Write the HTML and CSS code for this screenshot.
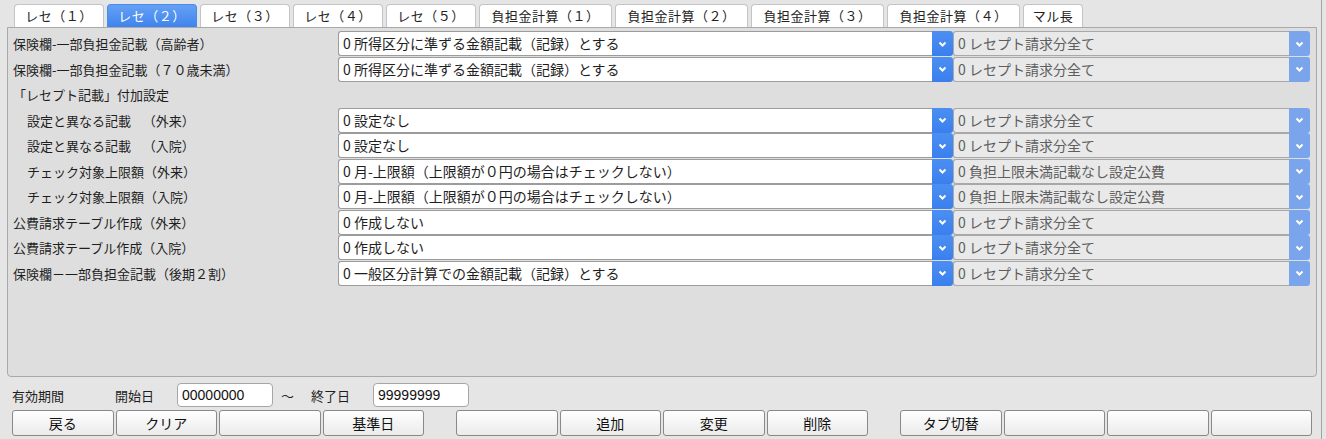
FILE: index.html
```html
<!DOCTYPE html>
<html lang="ja">
    <head>
        <meta charset="UTF-8" />
        <title>レセプト設定</title>
        <link rel="stylesheet" href="styles.css">
    </head>
    <body>
        <div class="screen">
            <!-- タブ -->
            <div class="tabs">
                <div class="tab">レセ（１）</div>
                <div class="tab active">レセ（２）</div>
                <div class="tab">レセ（３）</div>
                <div class="tab">レセ（４）</div>
                <div class="tab">レセ（５）</div>
                <div class="tab wide">負担金計算（１）</div>
                <div class="tab wide">負担金計算（２）</div>
                <div class="tab wide">負担金計算（３）</div>
                <div class="tab wide">負担金計算（４）</div>
                <div class="tab short">マル長</div>
            </div>

            <div class="panel">
                <div class="form-row">
                    <div class="label">保険欄-一部負担金記載（高齢者）</div>
                    <div class="combo"><span class="combo-text">0 所得区分に準ずる金額記載（記録）とする</span><span class="combo-btn"><svg width="9" height="6" viewBox="0 0 9 6"><polyline points="1.5,1.5 4.5,4.5 7.5,1.5" /></svg></span></div>
                    <div class="combo disabled"><span class="combo-text">0 レセプト請求分全て</span><span class="combo-btn"><svg width="9" height="6" viewBox="0 0 9 6"><polyline points="1.5,1.5 4.5,4.5 7.5,1.5" /></svg></span></div>
                </div>
                <div class="form-row">
                    <div class="label">保険欄-一部負担金記載（７０歳未満）</div>
                    <div class="combo"><span class="combo-text">0 所得区分に準ずる金額記載（記録）とする</span><span class="combo-btn"><svg width="9" height="6" viewBox="0 0 9 6"><polyline points="1.5,1.5 4.5,4.5 7.5,1.5" /></svg></span></div>
                    <div class="combo disabled"><span class="combo-text">0 レセプト請求分全て</span><span class="combo-btn"><svg width="9" height="6" viewBox="0 0 9 6"><polyline points="1.5,1.5 4.5,4.5 7.5,1.5" /></svg></span></div>
                </div>
                <div class="form-row">
                    <div class="label">「レセプト記載」付加設定</div>
                </div>
                <div class="form-row">
                    <div class="label indent">設定と異なる記載&nbsp;&nbsp;&nbsp;&nbsp;（外来）</div>
                    <div class="combo"><span class="combo-text">0 設定なし</span><span class="combo-btn"><svg width="9" height="6" viewBox="0 0 9 6"><polyline points="1.5,1.5 4.5,4.5 7.5,1.5" /></svg></span></div>
                    <div class="combo disabled"><span class="combo-text">0 レセプト請求分全て</span><span class="combo-btn"><svg width="9" height="6" viewBox="0 0 9 6"><polyline points="1.5,1.5 4.5,4.5 7.5,1.5" /></svg></span></div>
                </div>
                <div class="form-row">
                    <div class="label indent">設定と異なる記載&nbsp;&nbsp;&nbsp;&nbsp;（入院）</div>
                    <div class="combo"><span class="combo-text">0 設定なし</span><span class="combo-btn"><svg width="9" height="6" viewBox="0 0 9 6"><polyline points="1.5,1.5 4.5,4.5 7.5,1.5" /></svg></span></div>
                    <div class="combo disabled"><span class="combo-text">0 レセプト請求分全て</span><span class="combo-btn"><svg width="9" height="6" viewBox="0 0 9 6"><polyline points="1.5,1.5 4.5,4.5 7.5,1.5" /></svg></span></div>
                </div>
                <div class="form-row">
                    <div class="label indent">チェック対象上限額（外来）</div>
                    <div class="combo"><span class="combo-text">0 月-上限額（上限額が０円の場合はチェックしない）</span><span class="combo-btn"><svg width="9" height="6" viewBox="0 0 9 6"><polyline points="1.5,1.5 4.5,4.5 7.5,1.5" /></svg></span></div>
                    <div class="combo disabled"><span class="combo-text">0 負担上限未満記載なし設定公費</span><span class="combo-btn"><svg width="9" height="6" viewBox="0 0 9 6"><polyline points="1.5,1.5 4.5,4.5 7.5,1.5" /></svg></span></div>
                </div>
                <div class="form-row">
                    <div class="label indent">チェック対象上限額（入院）</div>
                    <div class="combo"><span class="combo-text">0 月-上限額（上限額が０円の場合はチェックしない）</span><span class="combo-btn"><svg width="9" height="6" viewBox="0 0 9 6"><polyline points="1.5,1.5 4.5,4.5 7.5,1.5" /></svg></span></div>
                    <div class="combo disabled"><span class="combo-text">0 負担上限未満記載なし設定公費</span><span class="combo-btn"><svg width="9" height="6" viewBox="0 0 9 6"><polyline points="1.5,1.5 4.5,4.5 7.5,1.5" /></svg></span></div>
                </div>
                <div class="form-row">
                    <div class="label">公費請求テーブル作成（外来）</div>
                    <div class="combo"><span class="combo-text">0 作成しない</span><span class="combo-btn"><svg width="9" height="6" viewBox="0 0 9 6"><polyline points="1.5,1.5 4.5,4.5 7.5,1.5" /></svg></span></div>
                    <div class="combo disabled"><span class="combo-text">0 レセプト請求分全て</span><span class="combo-btn"><svg width="9" height="6" viewBox="0 0 9 6"><polyline points="1.5,1.5 4.5,4.5 7.5,1.5" /></svg></span></div>
                </div>
                <div class="form-row">
                    <div class="label">公費請求テーブル作成（入院）</div>
                    <div class="combo"><span class="combo-text">0 作成しない</span><span class="combo-btn"><svg width="9" height="6" viewBox="0 0 9 6"><polyline points="1.5,1.5 4.5,4.5 7.5,1.5" /></svg></span></div>
                    <div class="combo disabled"><span class="combo-text">0 レセプト請求分全て</span><span class="combo-btn"><svg width="9" height="6" viewBox="0 0 9 6"><polyline points="1.5,1.5 4.5,4.5 7.5,1.5" /></svg></span></div>
                </div>
                <div class="form-row">
                    <div class="label">保険欄－一部負担金記載（後期２割）</div>
                    <div class="combo"><span class="combo-text">0 一般区分計算での金額記載（記録）とする</span><span class="combo-btn"><svg width="9" height="6" viewBox="0 0 9 6"><polyline points="1.5,1.5 4.5,4.5 7.5,1.5" /></svg></span></div>
                    <div class="combo disabled"><span class="combo-text">0 レセプト請求分全て</span><span class="combo-btn"><svg width="9" height="6" viewBox="0 0 9 6"><polyline points="1.5,1.5 4.5,4.5 7.5,1.5" /></svg></span></div>
                </div>
            </div>

            <!-- 有効期間 -->
            <div class="period">
                <span class="period-title">有効期間</span>
                <span class="period-label">開始日</span>
                <div class="text-input">00000000</div>
                <span class="period-sep">〜</span>
                <span class="period-label">終了日</span>
                <div class="text-input">99999999</div>
            </div>

            <!-- ファンクションキー -->
            <div class="func-keys">
                <div class="key-group">
                    <div class="key">戻る</div>
                    <div class="key">クリア</div>
                    <div class="key"></div>
                    <div class="key">基準日</div>
                </div>
                <div class="key-group">
                    <div class="key"></div>
                    <div class="key">追加</div>
                    <div class="key">変更</div>
                    <div class="key">削除</div>
                </div>
                <div class="key-group">
                    <div class="key">タブ切替</div>
                    <div class="key"></div>
                    <div class="key"></div>
                    <div class="key"></div>
                </div>
            </div>
        </div>
    </body>
</html>
```

FILE: styles.css
```css
body,
html {
    margin: 0;
    padding: 0;
    height: 100%;
    overflow: hidden;
    background: #e5e5e5;
    font-family: "Noto Sans CJK JP", "Noto Sans", sans-serif;
    font-size: 13px;
    color: #1e1e1e;
}

.screen {
    width: 1322px;
    height: 439px;
    box-sizing: border-box;
    padding: 4px 0 0 7px;
    border-right: 1px solid #a4a4a4;
}

/* タブ */
.tabs {
    display: flex;
    gap: 3px;
    margin-left: 7px;
    height: 23px;
}

.tab {
    width: 90px;
    height: 23px;
    box-sizing: border-box;
    border: 1px solid #c4c4c4;
    border-bottom: none;
    border-radius: 4px 4px 0 0;
    background: #fff;
    color: #222;
    text-align: center;
    line-height: 22px;
    letter-spacing: 0.5px;
}

.tab.wide {
    width: 133px;
}

.tab.short {
    width: 60px;
}

.tab.active {
    background: linear-gradient(#64a0f4, #3f84ee);
    border-color: #4a8aec;
    color: #fff;
}

/* パネル */
.panel {
    width: 1310px;
    height: 350px;
    box-sizing: border-box;
    padding: 3px 6px 0 5px;
    border: 1px solid #a9a9a9;
    border-radius: 0 0 4px 4px;
    background: #dedede;
}

.form-row {
    display: grid;
    grid-template-columns: 325px 615px 357px;
    height: 25.5px;
    align-items: center;
}

.label {
    white-space: nowrap;
    line-height: 25px;
}

.label.indent {
    padding-left: 14px;
}

.combo {
    display: flex;
    height: 25px;
    box-sizing: border-box;
}

.combo-text {
    flex: 1;
    box-sizing: border-box;
    padding-left: 4px;
    line-height: 23px;
    font-size: 14px;
    background: #fff;
    border: 1px solid #9c9c9c;
    border-right: none;
    border-radius: 3px 0 0 3px;
    white-space: nowrap;
    overflow: hidden;
}

.combo-btn {
    width: 21px;
    display: flex;
    align-items: center;
    justify-content: center;
    background: linear-gradient(#4c8ff2, #3a7fee);
    border-radius: 0 3px 3px 0;
}

.combo-btn svg polyline {
    fill: none;
    stroke: #fff;
    stroke-width: 2;
}

.combo.disabled .combo-text {
    background: #e9e9e9;
    border-color: #a8a8a8;
    color: #5e5e5e;
}

.combo.disabled .combo-btn {
    background: #7aa4ec;
}

/* 有効期間 */
.period {
    display: flex;
    align-items: center;
    height: 24px;
    margin-top: 6px;
    padding-left: 5px;
}

.period-title {
    width: 103px;
}

.period-label {
    width: 62px;
}

.period-sep {
    width: 38px;
    padding-left: 8px;
    box-sizing: border-box;
}

.text-input {
    width: 96px;
    height: 24px;
    box-sizing: border-box;
    padding-left: 4px;
    line-height: 22px;
    background: #fff;
    border: 1px solid #a6a6a6;
    border-radius: 4px;
    font-family: "Liberation Sans", sans-serif;
    font-size: 14px;
    color: #111;
}

/* ファンクションキー */
.func-keys {
    display: flex;
    gap: 32px;
    margin-top: 3px;
    padding-left: 5px;
}

.key-group {
    display: grid;
    grid-template-columns: repeat(4, 1fr);
    gap: 2px;
    width: 412px;
}

.key {
    height: 26px;
    box-sizing: border-box;
    border: 1px solid #898989;
    border-radius: 3px;
    background: linear-gradient(#fefefe, #ebebeb);
    text-align: center;
    line-height: 24px;
    font-size: 14px;
    color: #111;
}
```
